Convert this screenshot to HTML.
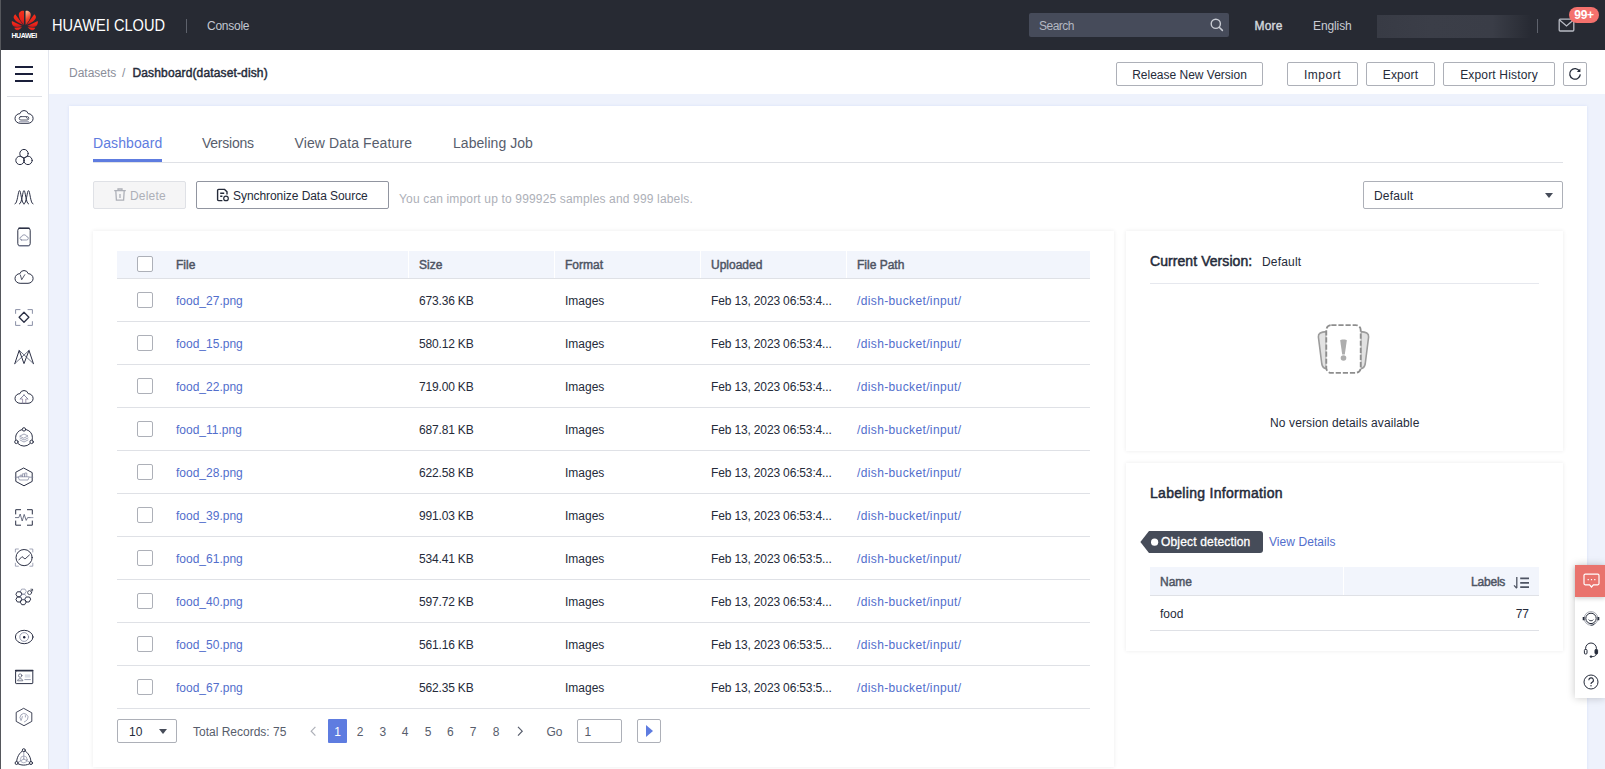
<!DOCTYPE html>
<html lang="en">
<head>
<meta charset="utf-8">
<title>Dashboard(dataset-dish)</title>
<style>
*{box-sizing:border-box;margin:0;padding:0}
html,body{width:1605px;height:769px;overflow:hidden;background:#eef2fc;font-family:"Liberation Sans",sans-serif;font-size:12px;color:#252b3a}
body{position:relative}
.abs{position:absolute}
.t{position:absolute;white-space:nowrap;line-height:16px;height:16px}
#edge{left:0;top:0;width:1px;height:769px;background:#55575c;z-index:50}
#topbar{left:0;top:0;width:1605px;height:50px;background:#272a33}
#sidebar{left:1px;top:50px;width:48px;height:719px;background:#fff;border-right:1px solid #e3e6ee}
#crumb{left:49px;top:50px;width:1556px;height:44px;background:#fff}
#card{left:69px;top:106px;width:1518px;height:680px;background:#fff;box-shadow:0 0 3px rgba(94,124,224,0.14)}
.btn{position:absolute;height:24px;padding-top:1px;border:1px solid #adb0b8;border-radius:2px;background:#fff;text-align:center;line-height:22px;font-size:12px;color:#252b3a;white-space:nowrap}
.panel{position:absolute;background:#fff;box-shadow:0 0 4px rgba(30,30,40,0.09)}

.tab{position:absolute;top:134px;font-size:14px;line-height:18px;height:18px;white-space:nowrap;color:#575d6c}
.cb{position:absolute;width:16px;height:16px;border:1px solid #adb0b8;border-radius:2px;background:#fff}
.th{position:absolute;top:0;height:27px;background:#f2f5fc;font-weight:400;-webkit-text-stroke:0.45px #4e5463;color:#4e5463;line-height:29px;padding-left:10px;white-space:nowrap}
.row{position:absolute;left:117px;width:973px;height:43px;border-bottom:1px solid #dfe1e6}
.row .t{top:14px}
.lk{color:#526ecc}
.f2{letter-spacing:-0.17px}
.f4{letter-spacing:-0.15px}
.f5{letter-spacing:0.37px}
.pg{position:absolute;top:724px;width:20px;text-align:center;line-height:16px;color:#575d6c}
</style>
</head>
<body>
<div id="topbar" class="abs">
<svg class="abs" style="left:11px;top:10px" width="28" height="21" viewBox="0 0 28 21"><defs><linearGradient id="lg" x1="0" y1="0" x2="0" y2="1"><stop offset="0" stop-color="#f5301b"/><stop offset="0.6" stop-color="#e8231a"/><stop offset="1" stop-color="#c4161c"/></linearGradient><linearGradient id="lh" x1="0.3" y1="0" x2="0.6" y2="1"><stop offset="0" stop-color="#fcb792"/><stop offset="0.55" stop-color="#f0452c"/><stop offset="1" stop-color="#e0201a"/></linearGradient></defs><g fill="url(#lg)"><path d="M13 0.9 C10.5 0.2 7.6 2 7.8 5.2 C8 8.6 10.6 12.4 12.9 14.9 C13.1 10 13.1 5 13 0.9 Z"/><path d="M 14.6 0.9 C 17.1 0.2 20 2 19.8 5.2 C 19.6 8.6 17 12.4 14.7 14.9 C 14.5 10 14.5 5 14.6 0.9 Z" fill="url(#lh)"/><path d="M4.3 4.2 L12.2 15 C8.6 13.6 4.4 11.4 3 8.6 C2.2 7 2.8 5.2 4.3 4.2 Z"/><path d="M 23.3 4.2 L 15.4 15 C 19 13.6 23.2 11.4 24.6 8.6 C 25.4 7 24.8 5.2 23.3 4.2 Z"/><path d="M0.9 11 L11.3 16 C8 17 4.6 17.2 3 16.4 C1.2 15.4 0.4 13 0.9 11 Z"/><path d="M 26.7 11 L 16.3 16 C 19.6 17 23 17.2 24.6 16.4 C 26.4 15.4 27.2 13 26.7 11 Z"/><path d="M3.4 17.8 C5.8 17.6 8.6 17.4 10.9 17.2 C9.6 18.8 8 20 6.4 20.3 C5 20.4 3.8 19.2 3.4 17.8 Z"/><path d="M 24.2 17.8 C 21.8 17.6 19 17.4 16.7 17.2 C 18 18.8 19.6 20 21.2 20.3 C 22.6 20.4 23.8 19.2 24.2 17.8 Z"/></g></svg>
<div class="t" id="hw" style="left:11.5px;top:31px;font-size:7px;font-weight:700;color:#fff;line-height:9px;height:9px;letter-spacing:-0.45px">HUAWEI</div>
<div class="t" id="brand" style="left:52px;top:16px;font-size:16px;line-height:20px;height:20px;color:#fff;transform:scaleX(0.912);transform-origin:0 0">HUAWEI CLOUD</div>
<div class="abs" style="left:186px;top:19px;width:1px;height:14px;background:#5e626c"></div>
<div class="t" id="console" style="left:207px;top:18px;color:#c3c7d1;letter-spacing:-0.25px">Console</div>
<div class="abs" style="left:1029px;top:13px;width:200px;height:24px;background:#464b5a;border-radius:2px"></div>
<div class="t" id="search" style="left:1039px;top:18px;color:#b4b8c2;letter-spacing:-0.5px">Search</div>
<svg class="abs" style="left:1210px;top:18px" width="14" height="14" viewBox="0 0 14 14"><circle cx="5.8" cy="5.8" r="4.6" fill="none" stroke="#c9ccd4" stroke-width="1.4"/><path d="M9.2 9.2 L12.4 12.4" stroke="#c9ccd4" stroke-width="1.5" stroke-linecap="round"/></svg>
<div class="t" id="more" style="left:1254.5px;top:18px;color:#d4d7de;-webkit-text-stroke:0.4px #d4d7de;letter-spacing:0.2px">More</div>
<div class="t" id="english" style="left:1313px;top:18px;color:#c9ccd4;letter-spacing:-0.1px">English</div>
<div class="abs" style="left:1377px;top:15px;width:154px;height:23px;background:linear-gradient(90deg,#383b45 0,#3b3e48 35%,#3a3d47 75%,#2c2f38 94%,#272a33 100%)"></div>
<div class="abs" style="left:1537px;top:19px;width:1px;height:14px;background:#5e626c"></div>
<svg class="abs" style="left:1558px;top:18px" width="17" height="15" viewBox="0 0 17 15"><rect x="1.2" y="1.2" width="14.6" height="11.8" rx="1" fill="none" stroke="#b9bcc5" stroke-width="1.3"/><path d="M1.6 2 L8.5 8 L15.4 2" fill="none" stroke="#b9bcc5" stroke-width="1.3"/></svg>
<div class="abs" style="left:1569px;top:7px;width:30px;height:16px;border-radius:8px;background:#f4716d;color:#fff;font-weight:700;font-size:12px;line-height:16px;text-align:center;letter-spacing:-0.3px">99+</div>
</div>
<div id="edge" class="abs"></div>
<div id="sidebar" class="abs">
<div class="abs" style="left:14px;top:16px;width:18px;height:2px;background:#1a1f3a"></div><div class="abs" style="left:14px;top:23px;width:18px;height:2px;background:#1a1f3a"></div><div class="abs" style="left:14px;top:30px;width:18px;height:2px;background:#1a1f3a"></div>
<div class="abs" style="left:6px;top:46px;width:35px;height:1px;background:#dfe1e6"></div>
<svg class="abs" style="left:13px;top:57px" width="20" height="20" viewBox="0 0 20 20" fill="none" stroke="#2b3045" stroke-width="1" stroke-linecap="round" stroke-linejoin="round"><path d="M5.7 16.3 A4.8 4.8 0 0 1 5.9 6.7 A4.3 4.3 0 0 1 14.2 6.7 A4.8 4.8 0 0 1 14.4 16.3 Z"/><rect x="5.2" y="9.6" width="9.6" height="3.4" rx="1.7" stroke-width="0.8"/><path d="M12.2 10.4 L13.4 11.4" stroke-width="0.8"/><path d="M5.4 14.7 H14.6" stroke="#7d839c" stroke-width="0.8"/></svg>
<svg class="abs" style="left:13px;top:97px" width="20" height="20" viewBox="0 0 20 20" fill="none" stroke="#2b3045" stroke-width="1" stroke-linecap="round" stroke-linejoin="round"><circle cx="10" cy="6.6" r="4.2"/><circle cx="6" cy="13.4" r="4.2"/><circle cx="14" cy="13.4" r="4.2"/></svg>
<svg class="abs" style="left:13px;top:137px" width="20" height="20" viewBox="0 0 20 20" fill="none" stroke="#2b3045" stroke-width="1" stroke-linecap="round" stroke-linejoin="round"><path d="M1 17 C3.6 17 4 3.6 5.5 3.6 C7 3.6 7.4 17 10 17"/><path d="M5.5 17 C8.1 17 8.5 3.6 10 3.6 C11.5 3.6 11.9 17 14.5 17"/><path d="M10 17 C12.6 17 13 3.6 14.5 3.6 C16 3.6 16.4 17 19 17"/></svg>
<svg class="abs" style="left:13px;top:177px" width="20" height="20" viewBox="0 0 20 20" fill="none" stroke="#2b3045" stroke-width="1" stroke-linecap="round" stroke-linejoin="round"><rect x="3.8" y="1.3" width="12.4" height="17.4" rx="2"/><path d="M5 1.2 H15" stroke-width="1.6"/><path d="M5 18.9 H15" stroke="#7d839c" stroke-width="0.9"/><path d="M7.6 13 H12.6 A1.7 1.7 0 0 0 12.6 9.6 A2.6 2.6 0 0 0 7.6 9.8 A1.6 1.6 0 0 0 7.6 13 Z" stroke="#7d839c" stroke-width="0.8"/></svg>
<svg class="abs" style="left:13px;top:217px" width="20" height="20" viewBox="0 0 20 20" fill="none" stroke="#2b3045" stroke-width="1" stroke-linecap="round" stroke-linejoin="round"><path d="M5.7 16.3 A4.8 4.8 0 0 1 5.9 6.7 A4.3 4.3 0 0 1 14.2 6.7 A4.8 4.8 0 0 1 14.4 16.3 Z"/><path d="M6.4 8 L7.7 12.7 L10.8 7.7" stroke-width="0.8"/></svg>
<svg class="abs" style="left:13px;top:257px" width="20" height="20" viewBox="0 0 20 20" fill="none" stroke="#2b3045" stroke-width="1" stroke-linecap="round" stroke-linejoin="round"><path d="M10 5.2 L14.9 10.2 L10 15.2 L5.1 10.2 Z" stroke-width="1.3"/><path d="M1.6 6.4 V2.6 H6 M14 2.6 H18.4 V6.4 M18.4 14.6 V18.4 H14 M6 18.4 H1.6 V14.6" stroke="#7d839c" stroke-width="0.9"/></svg>
<svg class="abs" style="left:13px;top:297px" width="20" height="20" viewBox="0 0 20 20" fill="none" stroke="#2b3045" stroke-width="1" stroke-linecap="round" stroke-linejoin="round"><path d="M0.8 16.6 L5.2 3.4 L10 16.6 L15 3.4 L19.4 16.6"/><path d="M5.2 3.4 L19.4 16.6 M15 3.4 L0.8 16.6" stroke-width="0.8" stroke="#4a5068"/></svg>
<svg class="abs" style="left:13px;top:337px" width="20" height="20" viewBox="0 0 20 20" fill="none" stroke="#2b3045" stroke-width="1" stroke-linecap="round" stroke-linejoin="round"><path d="M5.7 16.3 A4.8 4.8 0 0 1 5.9 6.7 A4.3 4.3 0 0 1 14.2 6.7 A4.8 4.8 0 0 1 14.4 16.3 Z"/><path d="M10 8 L14 12 H11.8 V16.2 M10 8 L6.2 12 H8.6 V16.2" stroke-width="0.8" stroke="#8a7f9c"/><path d="M10 8 L14 12 M10 8 L6.2 12" stroke-width="0.8" stroke="#7d839c"/></svg>
<svg class="abs" style="left:13px;top:377px" width="20" height="20" viewBox="0 0 20 20" fill="none" stroke="#2b3045" stroke-width="1" stroke-linecap="round" stroke-linejoin="round"><circle cx="10" cy="10.7" r="8.4" stroke-dasharray="13 4.6" stroke-dashoffset="-6.7"/><circle cx="10" cy="2.4" r="1.7" fill="#fff"/><circle cx="2.4" cy="14.9" r="1.7" fill="#fff"/><circle cx="17.6" cy="14.9" r="1.7" fill="#fff"/><path d="M6 9 L10 7 L14 9 L10 11 Z M6 11 L10 13 L14 11 M6 13 L10 15 L14 13" stroke-width="0.7" stroke="#7d839c"/></svg>
<svg class="abs" style="left:13px;top:417px" width="20" height="20" viewBox="0 0 20 20" fill="none" stroke="#2b3045" stroke-width="1" stroke-linecap="round" stroke-linejoin="round"><path d="M10 1.2 L18.2 5.6 V14.4 L10 18.8 L1.8 14.4 V5.6 Z"/><path d="M1.2 10.2 H4.4 M15.6 10.2 H18.8" stroke="#7d839c" stroke-width="0.8"/><path d="M4.4 9.8 H15.2 L14 13 H5.8 Z M6 9.6 V8.2 H8 V9.6 M8.4 9.6 V6.8 H10.4 V9.6 M10.8 9.6 V6 H12.8 V9.6" stroke-width="0.7" stroke="#7d839c"/></svg>
<svg class="abs" style="left:13px;top:457px" width="20" height="20" viewBox="0 0 20 20" fill="none" stroke="#2b3045" stroke-width="1" stroke-linecap="round" stroke-linejoin="round"><path d="M1.7 7 V2.7 H6.6 M13.4 2.7 H18.3 V7 M18.3 14 V18.2 H13.4 M6.6 18.2 H1.7 V14"/><path d="M1.4 10.6 H4.8 L6.2 7 L8.2 14 L10.2 7.4 L12.2 13.4 L13.6 10.6 H16" stroke-width="0.8" stroke="#4a5068"/><path d="M16 10.6 H19" stroke-width="0.8" stroke="#7d839c"/></svg>
<svg class="abs" style="left:13px;top:497px" width="20" height="20" viewBox="0 0 20 20" fill="none" stroke="#2b3045" stroke-width="1" stroke-linecap="round" stroke-linejoin="round"><circle cx="10.1" cy="10.6" r="8.1"/><path d="M4.8 13 L8 9.6 L11 12 L15.4 8" stroke-width="0.9"/><path d="M1.4 5 V2 H4.4 M15.8 2 H18.8 V5 M18.8 16.2 V19.2 H15.8 M4.4 19.2 H1.4 V16.2" stroke="#7d839c" stroke-width="0.7"/></svg>
<svg class="abs" style="left:13px;top:537px" width="20" height="20" viewBox="0 0 20 20" fill="none" stroke="#2b3045" stroke-width="1" stroke-linecap="round" stroke-linejoin="round"><path d="M12.1 4.6 L10.6 7.1 L7.8 7.1 L6.3 4.6 L7.7 2.1 L10.6 2.1 Z" stroke-width="0.7" stroke="#7d839c"/><path d="M7.7 7.3 L6.2 9.8 L3.4 9.8 L1.9 7.3 L3.3 4.8 L6.2 4.8 Z"/><path d="M7.7 12.5 L6.2 15.0 L3.4 15.0 L1.9 12.5 L3.3 10.0 L6.2 10.0 Z"/><path d="M12.1 15.2 L10.6 17.7 L7.8 17.7 L6.3 15.2 L7.7 12.7 L10.6 12.7 Z"/><path d="M16.5 12.5 L15.1 15.0 L12.2 15.0 L10.7 12.5 L12.1 10.0 L15.1 10.0 Z"/><path d="M12.1 9.9 L10.6 12.4 L7.8 12.4 L6.3 9.9 L7.7 7.4 L10.6 7.4 Z" stroke-width="0.7" stroke="#7d839c"/><circle cx="15.6" cy="5.6" r="2" stroke-width="0.8"/><path d="M17 4.2 L18.4 2.4 M16.8 2.2 H18.6 V4" stroke-width="0.7"/></svg>
<svg class="abs" style="left:13px;top:577px" width="20" height="20" viewBox="0 0 20 20" fill="none" stroke="#2b3045" stroke-width="1" stroke-linecap="round" stroke-linejoin="round"><ellipse cx="10.2" cy="10" rx="8.8" ry="6.7"/><circle cx="10.2" cy="10" r="4.4" stroke="#7d839c" stroke-width="0.8"/><circle cx="10.2" cy="10.2" r="1.2" fill="#1a1f3a" stroke="none"/></svg>
<svg class="abs" style="left:13px;top:617px" width="20" height="20" viewBox="0 0 20 20" fill="none" stroke="#2b3045" stroke-width="1" stroke-linecap="round" stroke-linejoin="round"><rect x="1.6" y="3.8" width="17.2" height="12.8" rx="0.6"/><path d="M1.6 3.6 H18.8" stroke-width="1.5"/><circle cx="6.2" cy="8.6" r="1.7" stroke-width="0.7" stroke="#4a5068"/><path d="M3.6 13.4 C3.8 11 8.6 11 8.8 13.4 Z" stroke-width="0.7" stroke="#4a5068"/><rect x="10.8" y="7.4" width="5.6" height="3.2" fill="#dcdfe8" stroke="none"/><path d="M10.8 12.6 H16.4" stroke-width="0.8" stroke="#7d839c"/></svg>
<svg class="abs" style="left:13px;top:657px" width="20" height="20" viewBox="0 0 20 20" fill="none" stroke="#2b3045" stroke-width="1" stroke-linecap="round" stroke-linejoin="round"><path d="M10 1.5 L17.8 5.8 V14.4 L10 18.7 L2.2 14.4 V5.8 Z" stroke-width="0.9"/><path d="M7 13.2 A4 4 0 1 1 13.4 12.6 C12.6 13.8 11 14.4 10.4 14.8 M7 13.2 C7.6 12 8.2 10.8 8.4 9.6 M11.4 8.6 V10" stroke-width="0.7" stroke="#7d839c"/></svg>
<svg class="abs" style="left:13px;top:697px" width="20" height="20" viewBox="0 0 20 20" fill="none" stroke="#2b3045" stroke-width="1" stroke-linecap="round" stroke-linejoin="round"><path d="M9.8 3 C14.6 5.8 17 10.6 17 16 C12.4 18.8 7.2 18.8 2.6 16 C2.6 10.6 5 5.8 9.8 3 Z"/><path d="M9.8 3 V12 M9.8 12 L2.6 16 M9.8 12 L17 16" stroke-width="0.7" stroke="#7d839c"/><circle cx="9.8" cy="12.4" r="3.4" stroke-width="0.6" stroke="#7d839c"/><circle cx="9.8" cy="3.2" r="1.5" fill="#fff"/><circle cx="2.6" cy="16" r="1.5" fill="#fff"/><circle cx="17" cy="16" r="1.5" fill="#fff"/></svg>
</div>
<div id="crumb" class="abs">
<div class="t" id="c1" style="left:20px;top:15px;color:#8a8e99;letter-spacing:0px">Datasets</div>
<div class="t" style="left:73px;top:15px;color:#8a8e99">/</div>
<div class="t" id="c2" style="left:83.5px;top:15px;color:#252b3a;-webkit-text-stroke:0.45px #252b3a;letter-spacing:0.14px">Dashboard(dataset-dish)</div>
<div class="btn" id="b1" style="left:1067px;top:12px;width:147px">Release New Version</div>
<div class="btn" id="b2" style="left:1238px;top:12px;width:71px;letter-spacing:0.5px">Import</div>
<div class="btn" id="b3" style="left:1317px;top:12px;width:69px;letter-spacing:0.1px">Export</div>
<div class="btn" id="b4" style="left:1394px;top:12px;width:112px;letter-spacing:0.16px">Export History</div>
<div class="btn" id="b5" style="left:1514px;top:12px;width:24px"><svg style="position:absolute;left:4px;top:4px" width="14" height="14" viewBox="0 0 14 14"><path d="M11.6 4.2 A5.3 5.3 0 1 0 12.3 7.4" fill="none" stroke="#252b3a" stroke-width="1.3"/><path d="M12.4 1.4 L12.4 5 L8.8 5 Z" fill="#252b3a"/></svg></div>
</div>
<div id="card" class="abs"></div>
<div class="abs" style="left:93px;top:162px;width:1470px;height:1px;background:#dfe1e6"></div>
<div class="tab" id="tab1" style="left:93px;color:#5e7ce0;letter-spacing:0.1px">Dashboard</div>
<div class="abs" style="left:93px;top:159px;width:69px;height:3px;background:#5e7ce0"></div>
<div class="tab" id="tab2" style="left:202px;letter-spacing:-0.24px">Versions</div>
<div class="tab" id="tab3" style="left:294.5px;letter-spacing:0.11px">View Data Feature</div>
<div class="tab" id="tab4" style="left:453px;letter-spacing:0.04px">Labeling Job</div>
<div class="abs" style="left:93px;top:181px;width:93px;height:28px;background:#f5f5f6;border:1px solid #dfe1e6;border-radius:2px"></div>
<svg class="abs" style="left:113px;top:188px" width="14" height="14" viewBox="0 0 14 14" fill="none" stroke="#adb0b8" stroke-width="1.3"><path d="M1.2 2.6 H12.8 M5 2.4 V1 H9 V2.4 M2.8 2.8 L3.4 12.2 H10.6 L11.2 2.8 M7 6 V10"/></svg>
<div class="t" id="del" style="left:130px;top:188px;color:#adb0b8;letter-spacing:0.2px">Delete</div>
<div class="abs" style="left:196px;top:181px;width:193px;height:28px;background:#fff;border:1px solid #9195a0;border-radius:2px"></div>
<svg class="abs" style="left:216px;top:188px" width="14" height="14" viewBox="0 0 14 14" fill="none" stroke="#252b3a" stroke-width="1.4"><path d="M6.4 12.6 H2.6 A1 1 0 0 1 1.6 11.6 V2.4 A1 1 0 0 1 2.6 1.4 H8.6 L11 3.8 V6.4 M4.2 5.2 H8.2 M4.2 8.2 H6.4"/><circle cx="10" cy="10.4" r="2.3" stroke-width="1.2"/></svg>
<div class="t" id="sync" style="left:233px;top:188px;color:#252b3a;letter-spacing:-0.06px">Synchronize Data Source</div>
<div class="t" id="hint" style="left:399px;top:191px;color:#adb0b8;letter-spacing:0.16px">You can import up to 999925 samples and 999 labels.</div>
<div class="abs" style="left:1363px;top:181px;width:200px;height:28px;background:#fff;border:1px solid #adb0b8;border-radius:2px"></div>
<div class="t" id="seldef" style="left:1374px;top:188px;letter-spacing:0.18px">Default</div>
<div class="abs" style="left:1545px;top:193px;width:0;height:0;border-left:4px solid transparent;border-right:4px solid transparent;border-top:5px solid #464c59"></div>
<div class="panel" style="left:93px;top:231px;width:1021px;height:536px"></div>
<div class="abs" style="left:117px;top:251px;width:973px;height:28px;border-bottom:1px solid #dfe1e6">
<div class="th" style="left:0;width:291px"></div>
<div class="th" style="left:49px;width:242px;background:none" id="h1">File</div>
<div class="th" style="left:292px;width:145px" id="h2">Size</div>
<div class="th" style="left:438px;width:145px" id="h3">Format</div>
<div class="th" style="left:584px;width:145px" id="h4">Uploaded</div>
<div class="th" style="left:730px;width:243px" id="h5">File Path</div>
<div class="cb" style="left:20px;top:5px"></div>
</div>
<div class="row" style="top:279px"><div class="cb" style="left:20px;top:13px"></div><div class="t lk f1" style="left:59px">food_27.png</div><div class="t f2" style="left:302px">673.36 KB</div><div class="t f3" style="left:448px">Images</div><div class="t f4" style="left:594px">Feb 13, 2023 06:53:4...</div><div class="t lk f5" style="left:740px">/dish-bucket/input/</div></div>
<div class="row" style="top:322px"><div class="cb" style="left:20px;top:13px"></div><div class="t lk f1" style="left:59px">food_15.png</div><div class="t f2" style="left:302px">580.12 KB</div><div class="t f3" style="left:448px">Images</div><div class="t f4" style="left:594px">Feb 13, 2023 06:53:4...</div><div class="t lk f5" style="left:740px">/dish-bucket/input/</div></div>
<div class="row" style="top:365px"><div class="cb" style="left:20px;top:13px"></div><div class="t lk f1" style="left:59px">food_22.png</div><div class="t f2" style="left:302px">719.00 KB</div><div class="t f3" style="left:448px">Images</div><div class="t f4" style="left:594px">Feb 13, 2023 06:53:4...</div><div class="t lk f5" style="left:740px">/dish-bucket/input/</div></div>
<div class="row" style="top:408px"><div class="cb" style="left:20px;top:13px"></div><div class="t lk f1" style="left:59px">food_11.png</div><div class="t f2" style="left:302px">687.81 KB</div><div class="t f3" style="left:448px">Images</div><div class="t f4" style="left:594px">Feb 13, 2023 06:53:4...</div><div class="t lk f5" style="left:740px">/dish-bucket/input/</div></div>
<div class="row" style="top:451px"><div class="cb" style="left:20px;top:13px"></div><div class="t lk f1" style="left:59px">food_28.png</div><div class="t f2" style="left:302px">622.58 KB</div><div class="t f3" style="left:448px">Images</div><div class="t f4" style="left:594px">Feb 13, 2023 06:53:4...</div><div class="t lk f5" style="left:740px">/dish-bucket/input/</div></div>
<div class="row" style="top:494px"><div class="cb" style="left:20px;top:13px"></div><div class="t lk f1" style="left:59px">food_39.png</div><div class="t f2" style="left:302px">991.03 KB</div><div class="t f3" style="left:448px">Images</div><div class="t f4" style="left:594px">Feb 13, 2023 06:53:4...</div><div class="t lk f5" style="left:740px">/dish-bucket/input/</div></div>
<div class="row" style="top:537px"><div class="cb" style="left:20px;top:13px"></div><div class="t lk f1" style="left:59px">food_61.png</div><div class="t f2" style="left:302px">534.41 KB</div><div class="t f3" style="left:448px">Images</div><div class="t f4" style="left:594px">Feb 13, 2023 06:53:5...</div><div class="t lk f5" style="left:740px">/dish-bucket/input/</div></div>
<div class="row" style="top:580px"><div class="cb" style="left:20px;top:13px"></div><div class="t lk f1" style="left:59px">food_40.png</div><div class="t f2" style="left:302px">597.72 KB</div><div class="t f3" style="left:448px">Images</div><div class="t f4" style="left:594px">Feb 13, 2023 06:53:4...</div><div class="t lk f5" style="left:740px">/dish-bucket/input/</div></div>
<div class="row" style="top:623px"><div class="cb" style="left:20px;top:13px"></div><div class="t lk f1" style="left:59px">food_50.png</div><div class="t f2" style="left:302px">561.16 KB</div><div class="t f3" style="left:448px">Images</div><div class="t f4" style="left:594px">Feb 13, 2023 06:53:5...</div><div class="t lk f5" style="left:740px">/dish-bucket/input/</div></div>
<div class="row" style="top:666px"><div class="cb" style="left:20px;top:13px"></div><div class="t lk f1" style="left:59px">food_67.png</div><div class="t f2" style="left:302px">562.35 KB</div><div class="t f3" style="left:448px">Images</div><div class="t f4" style="left:594px">Feb 13, 2023 06:53:5...</div><div class="t lk f5" style="left:740px">/dish-bucket/input/</div></div>
<div class="abs" style="left:117px;top:719px;width:60px;height:24px;background:#fff;border:1px solid #adb0b8;border-radius:2px"></div>
<div class="t" style="left:129px;top:724px">10</div>
<div class="abs" style="left:159px;top:729px;width:0;height:0;border-left:4px solid transparent;border-right:4px solid transparent;border-top:5px solid #464c59"></div>
<div class="t" id="total" style="left:193px;top:724px;color:#575d6c">Total Records: 75</div>
<svg class="abs" style="left:309px;top:725px" width="8" height="12" viewBox="0 0 8 12" fill="none" stroke="#adb0b8" stroke-width="1.2"><path d="M6.4 1.8 L2.2 6.2 L6.4 10.6"/></svg>
<div class="abs" style="left:328px;top:719px;width:19px;height:24px;background:#5e7ce0;border-radius:1px;color:#fff;text-align:center;line-height:26px">1</div>
<div class="pg" style="left:350.0px">2</div><div class="pg" style="left:372.8px">3</div><div class="pg" style="left:395.2px">4</div><div class="pg" style="left:418.0px">5</div><div class="pg" style="left:440.4px">6</div><div class="pg" style="left:463.2px">7</div><div class="pg" style="left:486.0px">8</div>
<svg class="abs" style="left:516px;top:725px" width="8" height="12" viewBox="0 0 8 12" fill="none" stroke="#575d6c" stroke-width="1.2"><path d="M2 1.8 L6.2 6.2 L2 10.6"/></svg>
<div class="t" style="left:546.5px;top:724px;color:#575d6c">Go</div>
<div class="abs" style="left:577px;top:719px;width:45px;height:24px;background:#fff;border:1px solid #adb0b8;border-radius:2px"></div>
<div class="t" style="left:584.5px;top:724px;color:#575d6c">1</div>
<div class="abs" style="left:637px;top:719px;width:24px;height:24px;background:#fff;border:1px solid #adb0b8;border-radius:2px"></div>
<div class="abs" style="left:646px;top:725px;width:0;height:0;border-top:6px solid transparent;border-bottom:6px solid transparent;border-left:7px solid #5e7ce0"></div>
<div class="panel" style="left:1126px;top:231px;width:437px;height:220px"></div>
<div class="t" id="cv" style="left:1150px;top:252px;font-size:14px;-webkit-text-stroke:0.5px #252b3a;line-height:18px;height:18px;letter-spacing:0.07px">Current Version:</div>
<div class="t" id="cvd" style="left:1262px;top:254px;letter-spacing:0.18px">Default</div>
<div class="abs" style="left:1150px;top:283px;width:389px;height:1px;background:#e6e8ee"></div>
<svg class="abs" style="left:1316px;top:322px" width="56" height="54" viewBox="0 0 56 54" fill="none">
<path d="M10.4 9.6 C5 9.8 2 11.4 2.4 15 L5.8 42 C6.4 45.4 8.4 46.4 10.4 46.8 Z" fill="#e2e2e2" stroke="#9c9c9c" stroke-width="1.6"/>
<path d="M44.6 9.6 C50 9.8 53 11.4 52.6 15 L49.2 42 C48.6 45.4 46.6 46.4 44.6 46.8 Z" fill="#e2e2e2" stroke="#9c9c9c" stroke-width="1.6"/>
<rect x="10.3" y="3.1" width="34.4" height="47.8" rx="5" fill="#fff" stroke="#8e8e8e" stroke-width="1.8" stroke-dasharray="5.2 1.9"/>
<path d="M24.2 18.6 C24.2 17.2 30.8 17.2 30.8 18.6 L28.8 32.6 H26.2 Z" fill="#adadad"/><circle cx="27.5" cy="36" r="2.8" fill="#adadad"/>
</svg>
<div class="t" id="nov" style="left:1270px;top:415px;letter-spacing:0.12px">No version details available</div>
<div class="panel" style="left:1126px;top:463px;width:437px;height:188px"></div>
<div class="t" id="li" style="left:1150px;top:484px;font-size:14px;-webkit-text-stroke:0.5px #252b3a;line-height:18px;height:18px;letter-spacing:0.3px">Labeling Information</div>
<svg class="abs" style="left:1140px;top:531px" width="123" height="22" viewBox="0 0 123 22"><path d="M0.4 11 L9 0 H120 A3 3 0 0 1 123 3 V19 A3 3 0 0 1 120 22 H9 Z" fill="#464c59"/><circle cx="14.6" cy="11.2" r="3.6" fill="#fff"/></svg>
<div class="t" id="od" style="left:1161px;top:534px;color:#fff;-webkit-text-stroke:0.3px #fff;letter-spacing:0.17px">Object detection</div>
<div class="t lk" id="vd" style="left:1269px;top:534px;letter-spacing:0.06px">View Details</div>
<div class="abs" style="left:1150px;top:567px;width:389px;height:29px;border-bottom:1px solid #dfe1e6">
<div class="th" style="left:0;width:193px;height:28px;line-height:30px">Name</div>
<div class="th" style="left:194px;width:195px;height:28px;line-height:29px;padding:0"></div>
</div>
<div class="t" id="lbl" style="left:1471px;top:574px;-webkit-text-stroke:0.45px #4e5463;color:#4e5463;letter-spacing:-0.2px">Labels</div>
<svg class="abs" style="left:1513px;top:576px" width="17" height="14" viewBox="0 0 17 14" fill="none" stroke="#4e5463"><path d="M3.8 1 V12 M1 9.4 L3.8 12.2" stroke-width="1.3"/><path d="M7.2 2.4 H16 M7.2 6.8 H16 M7.2 11.2 H16" stroke-width="1.8"/></svg>
<div class="t" style="left:1160px;top:606px">food</div>
<div class="t" style="left:1489px;top:606px;width:40px;text-align:right">77</div>
<div class="abs" style="left:1150px;top:630px;width:389px;height:1px;background:#dfe1e6"></div>
<div class="abs" style="left:1575px;top:565px;width:30px;height:133px;background:#fff;box-shadow:0 0 8px rgba(0,0,0,0.22)"></div>
<div class="abs" style="left:1575px;top:565px;width:30px;height:32px;background:#e9736d;box-shadow:0 2px 4px rgba(0,0,0,0.16)"></div>

<svg class="abs" style="left:1583px;top:573px" width="17" height="16" viewBox="0 0 17 16" fill="none" stroke="#fff" stroke-width="1.2"><path d="M2.2 1.2 H14.8 A1.2 1.2 0 0 1 16 2.4 V10.6 A1.2 1.2 0 0 1 14.8 11.8 H10.4 L8.5 14 L6.6 11.8 H2.2 A1.2 1.2 0 0 1 1 10.6 V2.4 A1.2 1.2 0 0 1 2.2 1.2 Z"/><path d="M4.6 6.6 H5.8 M7.9 6.6 H9.1 M11.2 6.6 H12.4" stroke-width="1.4"/></svg>
<svg class="abs" style="left:1582px;top:610px" width="18" height="18" viewBox="0 0 18 18" fill="none" stroke="#252b3a" stroke-width="1"><circle cx="9" cy="8.4" r="5.2"/><circle cx="9" cy="8.4" r="6.8" stroke-width="0.6" stroke="#6a6f7d"/><path d="M6.6 9.6 C7.6 11.2 10.4 11.2 11.4 9.6" stroke-width="0.9"/><path d="M1.6 7 V10.2 M16.4 7 V10.2" stroke-width="1.8"/><path d="M12.8 13.4 C11.8 15 10 15.4 8.6 15.2" stroke-width="0.9"/></svg>
<svg class="abs" style="left:1582px;top:641px" width="18" height="18" viewBox="0 0 18 18" fill="none" stroke="#252b3a" stroke-width="1"><path d="M3.6 8.6 V7.4 A5.4 5.4 0 0 1 14.4 7.4 V8.6"/><rect x="2.4" y="8.4" width="2.6" height="4.6" rx="1"/><rect x="13" y="8.4" width="2.6" height="4.6" rx="1" fill="#252b3a"/><path d="M14.4 13 C14 15.2 11.6 15.8 9.6 15.6" stroke-width="0.9"/><circle cx="9" cy="15.6" r="0.8" fill="#252b3a"/></svg>
<svg class="abs" style="left:1582px;top:673px" width="18" height="18" viewBox="0 0 18 18" fill="none" stroke="#252b3a" stroke-width="1"><circle cx="9" cy="9" r="7"/><path d="M6.8 7.2 A2.3 2.3 0 1 1 9.8 9.4 C9.2 9.7 9 10 9 11" stroke-width="1.1"/><circle cx="9" cy="12.8" r="0.7" fill="#252b3a" stroke="none"/></svg>
</body>
</html>
